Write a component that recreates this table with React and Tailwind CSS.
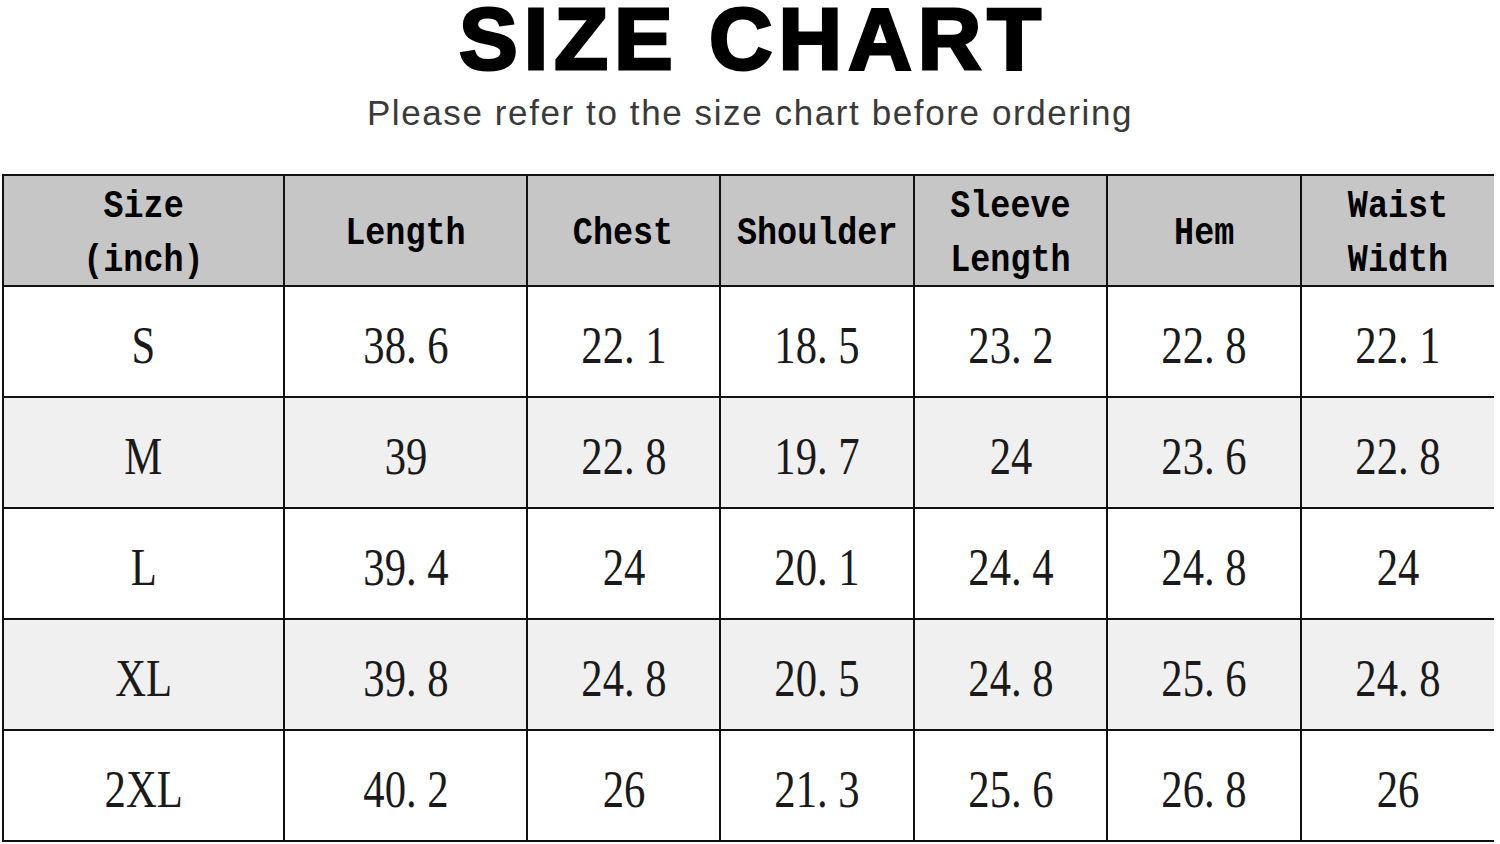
const headers = [
  ['Size', '(inch)'],
  ['Length'],
  ['Chest'],
  ['Shoulder'],
  ['Sleeve', 'Length'],
  ['Hem'],
  ['Waist', 'Width'],
];

const rows = [
  ['S', '38. 6', '22. 1', '18. 5', '23. 2', '22. 8', '22. 1'],
  ['M', '39', '22. 8', '19. 7', '24', '23. 6', '22. 8'],
  ['L', '39. 4', '24', '20. 1', '24. 4', '24. 8', '24'],
  ['XL', '39. 8', '24. 8', '20. 5', '24. 8', '25. 6', '24. 8'],
  ['2XL', '40. 2', '26', '21. 3', '25. 6', '26. 8', '26'],
];

const App = () => {
  return (
    <div className="w-[1500px] h-[844px] bg-white overflow-hidden">
      <div className="h-[174px] pt-[3px] flex flex-col items-center">
        <h1 className="text-[88px] leading-[72px] font-bold tracking-[6px] pl-[6px] text-black font-['Liberation_Sans',sans-serif] [-webkit-text-stroke:3px_black]">
          SIZE CHART
        </h1>
        <p className="mt-[18px] text-[35px] leading-[40px] tracking-[1.6px] text-[#3a3a3a] font-['Liberation_Sans',sans-serif]">
          Please refer to the size chart before ordering
        </p>
      </div>

      <div className="ml-[2px] w-[1492px] grid grid-cols-[279px_241px_191px_192px_191px_192px_192px] grid-rows-[109px_109px_109px_109px_109px_109px] gap-[2px] p-[2px] bg-[#111]">
        {headers.map((lines, i) => (
          <div
            key={i}
            className="bg-[#c6c6c6] pt-[6px] flex flex-col items-center justify-center text-black font-['Liberation_Mono',monospace] font-bold text-[38px] leading-[54px]"
          >
            {lines.map(line => (
              <span key={line} className="block scale-x-[0.88] whitespace-nowrap">{line}</span>
            ))}
          </div>
        ))}

        {rows.map((row, r) =>
          row.map((val, c) => (
            <div
              key={`${r}-${c}`}
              className={`${r % 2 === 1 ? 'bg-[#f0f0f0]' : 'bg-white'} pt-[8px] flex items-center justify-center text-[#1a1a1a] font-['Liberation_Serif',serif] text-[52px] leading-none`}
            >
              <span className="block scale-x-[0.82] whitespace-pre">{val}</span>
            </div>
          ))
        )}
      </div>
    </div>
  );
};

export default App;
